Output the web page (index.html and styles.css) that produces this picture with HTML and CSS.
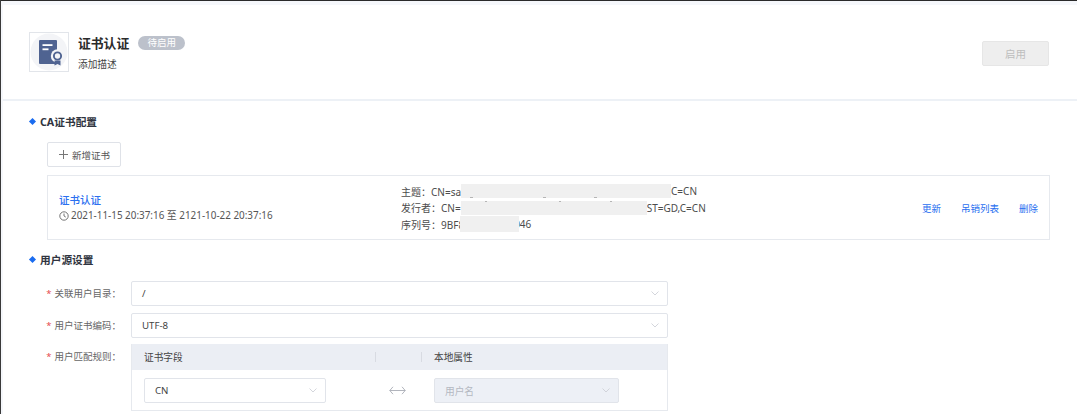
FILE: index.html
```html
<!DOCTYPE html>
<html lang="zh">
<head>
<meta charset="utf-8">
<title>证书认证</title>
<link rel="stylesheet" href="styles.css">
</head>
<body>
<div class="topbar"></div>
<main class="page">
  <header class="head">
    <div class="logo">
      <svg width="38" height="38" viewBox="0 0 38 38">
        <circle cx="19" cy="19" r="18.500" fill="#f3f4f7"/>
        <rect x="9" y="7" width="18" height="24" rx="1" fill="#4f6391"/>
        <rect x="12.500" y="11.200" width="10" height="1.800" fill="#fff"/>
        <rect x="12.500" y="15.400" width="6" height="1.800" fill="#fff"/>
        <circle cx="27.500" cy="23" r="6.700" fill="#f3f4f7"/>
        <circle cx="27.500" cy="23" r="3.600" fill="none" stroke="#4f6391" stroke-width="1.900"/>
        <path d="M24.500 27.500h6v5l-3-1.500-3 1.500z" fill="#4f6391"/>
      </svg>
    </div>
    <div class="head-text">
      <div class="title-row">
        <h1 class="title">证书认证</h1>
        <span class="badge">待启用</span>
      </div>
      <p class="desc">添加描述</p>
    </div>
    <button class="enable" type="button">启用</button>
  </header>

  <section class="ca">
    <h2 class="section-title">CA证书配置</h2>
    <button class="add" type="button">
      <svg width="11" height="11" viewBox="0 0 11 11"><path d="M5.500 1v9M1 5.500h9" stroke="#777" stroke-width="1" fill="none"/></svg>
      <span>新增证书</span>
    </button>
    <div class="cert">
      <div class="cert-main">
        <a class="cert-name">证书认证</a>
        <div class="cert-date">
          <svg width="10" height="10" viewBox="0 0 10 10"><circle cx="5" cy="5" r="4.200" fill="none" stroke="#666" stroke-width=".9"/><path d="M5 2.500V5l1.800 1.100" fill="none" stroke="#666" stroke-width=".9"/></svg>
          <span>2021-11-15 20:37:16 至 2121-10-22 20:37:16</span>
        </div>
      </div>
      <div class="cert-info">
        <div class="line">主题：CN=sa<span class="blur b1"></span>C=CN</div>
        <div class="line">发行者：CN=<span class="blur b2"></span>ST=GD,C=CN</div>
        <div class="line">序列号：9BF8<span class="blur b3"></span>046</div>
      </div>
      <div class="cert-actions">
        <a>更新</a>
        <a>吊销列表</a>
        <a>删除</a>
      </div>
    </div>
  </section>

  <section class="source">
    <h2 class="section-title">用户源设置</h2>
    <div class="form">
      <div class="field">
        <label class="label">关联用户目录：</label>
        <div class="select wide"><span>/</span><svg class="chev" width="8" height="5" viewBox="0 0 8 5"><path d="M.5.500L4 4 7.500.500" fill="none" stroke="#c9ccd3" stroke-width=".8"/></svg></div>
      </div>
      <div class="field">
        <label class="label">用户证书编码：</label>
        <div class="select wide"><span>UTF-8</span><svg class="chev" width="8" height="5" viewBox="0 0 8 5"><path d="M.5.500L4 4 7.500.500" fill="none" stroke="#c9ccd3" stroke-width=".8"/></svg></div>
      </div>
      <div class="field">
        <label class="label">用户匹配规则：</label>
        <div class="rules">
          <div class="rules-head">
            <div class="col-a">证书字段</div>
            <div class="col-b"></div>
            <div class="col-c">本地属性</div>
          </div>
          <div class="rules-row">
            <div class="col-a"><div class="select small"><span>CN</span><svg class="chev" width="8" height="5" viewBox="0 0 8 5"><path d="M.5.500L4 4 7.500.500" fill="none" stroke="#c9ccd3" stroke-width=".8"/></svg></div></div>
            <div class="col-b arrow"><svg width="17" height="9" viewBox="0 0 17 9"><path d="M4 .8L.8 4.500 4 8.200M.8 4.500h15.400M13 .8l3.200 3.700L13 8.200" fill="none" stroke="#a9adb5" stroke-width=".9"/></svg></div>
            <div class="col-c"><div class="select small off"><span>用户名</span><svg class="chev" width="8" height="5" viewBox="0 0 8 5"><path d="M.5.500L4 4 7.500.500" fill="none" stroke="#c9ccd3" stroke-width=".8"/></svg></div></div>
          </div>
        </div>
      </div>
    </div>
  </section>
</main>
</body>
</html>
```
FILE: styles.css
```css
* { box-sizing: border-box; }
html, body { margin: 0; padding: 0; height: 414px; overflow: hidden; }
body {
  background: #f5f7fb;
  border-left: 1px solid #3a3a3a;
  font-family: "Noto Sans", "Noto Sans CJK SC", sans-serif;
  color: #333;
  font-size: 10px;
}
.topbar { height: 1px; background: #2a2a2a; }
.page {
  margin: 4px 0 0 2px;
  background: #fff;
  height: 409px;
  overflow: hidden;
}
.head {
  display: flex;
  align-items: flex-start;
  height: 96px;
  padding: 27px 28px 0 26px;
  border-bottom: 2px solid #edf1f6;
}
.logo {
  width: 40px;
  height: 40px;
  border: 1px solid #e2e5ea;
  display: flex;
  align-items: center;
  justify-content: center;
  flex: none;
}
.head-text { margin-left: 9px; flex: 1; }
.title-row { display: flex; align-items: center; height: 22px; }
.title { margin: 0; font-size: 12.800px; font-weight: 700; color: #2b2b2b; line-height: 22px; }
.badge {
  margin-left: 9px;
  width: 47px;
  height: 14px;
  border-radius: 7px;
  background: #bcc1cb;
  color: #fff;
  font-size: 9.500px;
  line-height: 14px;
  text-align: center;
}
.desc { margin: 3px 0 0; font-size: 9.700px; line-height: 15px; color: #444; }
.enable {
  width: 67px;
  height: 25px;
  margin-top: 9px;
  border: 1px solid #e6e6e6;
  border-radius: 2px;
  background: #eeeeee;
  color: #bdbdbd;
  font: inherit;
  font-size: 10.500px;
  padding: 0;
}
.section-title {
  position: relative;
  margin: 0;
  padding-left: 37px;
  font-size: 10.700px;
  font-weight: 700;
  line-height: 16px;
  color: #2f3440;
}
.section-title::before {
  content: "";
  position: absolute;
  left: 27px;
  top: 5px;
  width: 5px;
  height: 5px;
  background: #1a6cf0;
  transform: rotate(45deg);
}
.ca { padding-top: 13px; }
.add {
  display: flex;
  align-items: center;
  gap: 3px;
  width: 74px;
  height: 25px;
  margin: 12px 0 0 44px;
  padding: 0 0 0 10px;
  border: 1px solid #dfe2e8;
  border-radius: 2px;
  background: #fff;
  color: #555;
  font: inherit;
  font-size: 9.500px;
}
.cert {
  display: flex;
  align-items: center;
  width: 1003px;
  height: 65px;
  margin: 8px 0 0 44px;
  padding: 0 11px 0 11px;
  border: 1px solid #e6e9ee;
}
.cert-main { width: 342px; flex: none; padding-top: 1px; }
.cert-name { display: block; color: #2b70f0; font-size: 10.500px; font-weight: 500; line-height: 15px; }
.cert-date { display: flex; align-items: center; gap: 2px; color: #555; font-size: 9.900px; line-height: 15px; }
.cert-info { flex: 1; color: #4c4c4c; font-size: 10px; }
.line { display: flex; align-items: center; white-space: pre; height: 16.500px; }
.blur {
  display: inline-block;
  position: relative;
  z-index: 1;
  height: 14px;
  flex: none;
  background-color: #f0f0f0;
  filter: blur(.6px);
  background-repeat: no-repeat;
}
.b1 {
  width: 210px;
  background-image: linear-gradient(#b5b5b5, #b5b5b5), linear-gradient(#b5b5b5, #b5b5b5), linear-gradient(#b5b5b5, #b5b5b5);
  background-size: 3px 1px;
  background-position: 9px 100%, 82px 100%, 133px 100%;
}
.b2 {
  width: 186px;
  background-image: linear-gradient(#b5b5b5, #b5b5b5), linear-gradient(#b5b5b5, #b5b5b5), linear-gradient(#b5b5b5, #b5b5b5);
  background-size: 2px 1px;
  background-position: 24px 0, 98px 0, 149px 0;
}
.b3 { width: 59px; margin: 0 -5px 0 -4px; height: 16px; }
.cert-actions { display: flex; gap: 20px; color: #2b70f0; font-size: 9.500px; }
.source { padding-top: 12px; }
.form { margin-top: 13px; }
.field { display: flex; align-items: flex-start; margin-bottom: 6.500px; }
.label {
  width: 128px;
  flex: none;
  text-align: right;
  padding-right: 10px;
  line-height: 25px;
  font-size: 9.500px;
  color: #666;
}
.label::before {
  content: "*";
  color: #e5484d;
  margin-right: 3px;
}
.select {
  display: flex;
  align-items: center;
  justify-content: space-between;
  height: 25px;
  border: 1px solid #e1e4ea;
  border-radius: 2px;
  background: #fff;
  padding: 0 8px 0 10px;
  font-size: 9.700px;
  color: #444;
}
.wide { width: 537px; }
.small { width: 182px; }
.off { background: #edf0f6; color: #b4b8c1; width: 185px; }
.rules { width: 537px; border: 1px solid #e6e9ee; border-top: 0; }
.rules-head { display: flex; align-items: center; height: 26px; background: #ebeef4; font-size: 9.700px; color: #444; }
.rules-row { display: flex; align-items: center; height: 40px; padding-top: 1px; }
.col-a { width: 243px; padding-left: 12px; flex: none; }
.col-b { width: 47px; flex: none; }
.col-c { flex: 1; padding-left: 12px; }
.rules-head .col-b { height: 10px; border-left: 1px solid #d8dbe2; border-right: 1px solid #d8dbe2; }
.arrow { display: flex; justify-content: flex-start; padding-left: 14px; }
```
